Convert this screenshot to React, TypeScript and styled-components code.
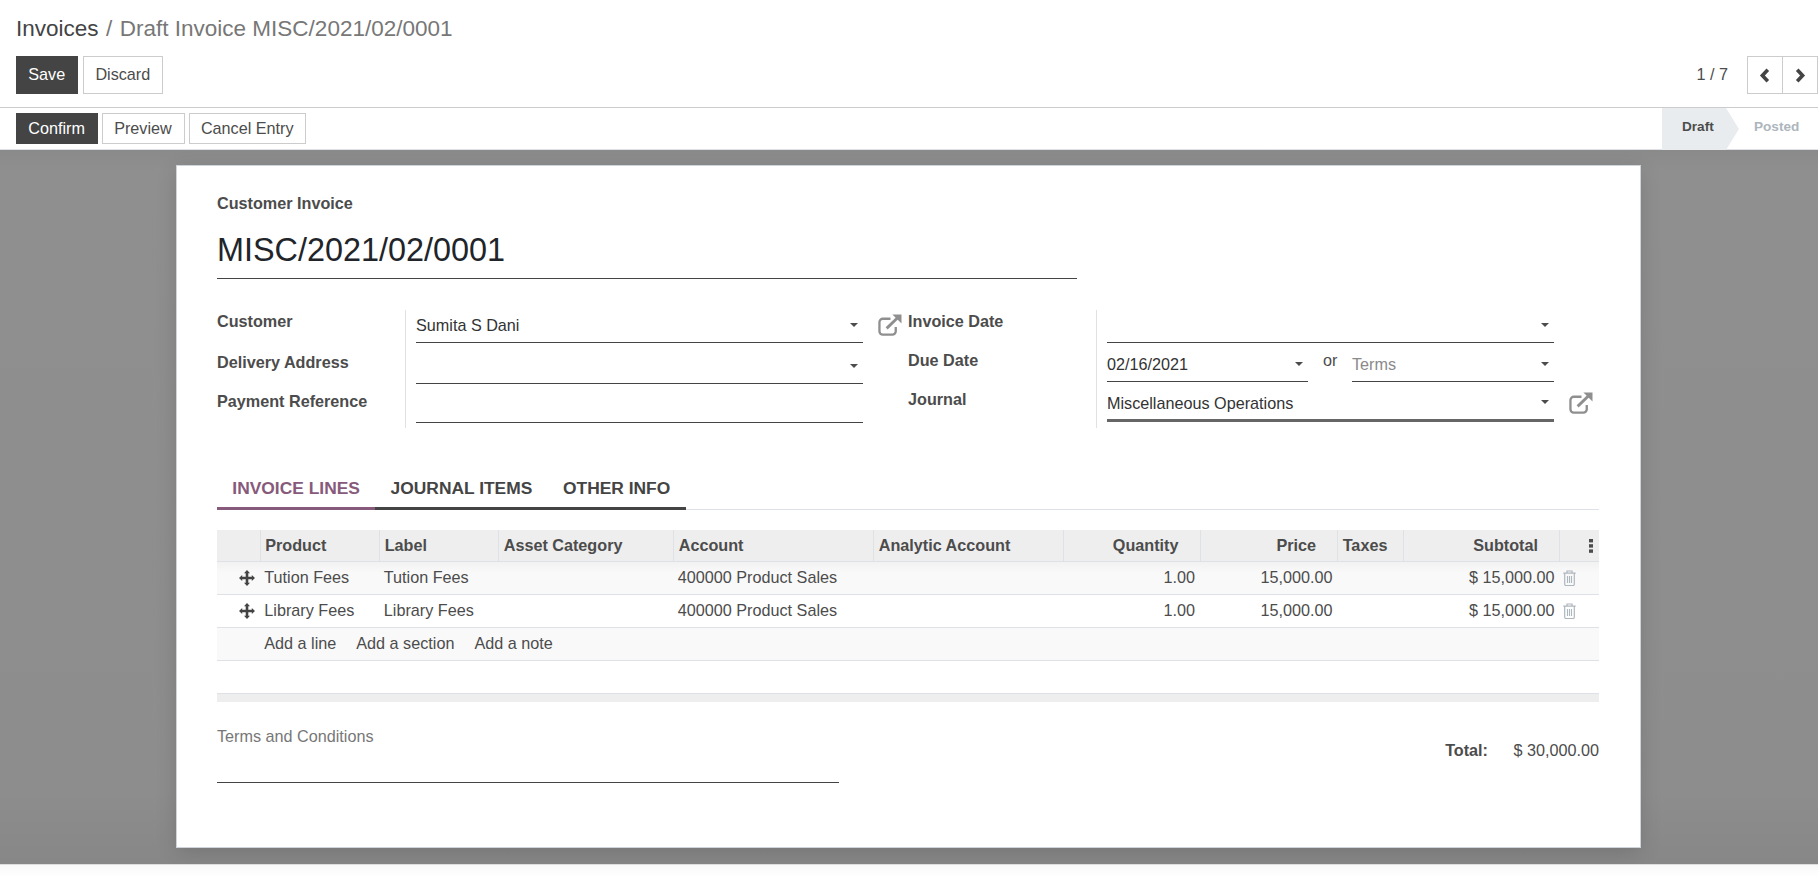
import React from "react";
import styled, { createGlobalStyle } from "styled-components";

const Global = createGlobalStyle`
  html, body { margin: 0; padding: 0; height: 100%; overflow: hidden; background: #fff; }
  body { font-family: "Liberation Sans", Arial, sans-serif; font-size: 16.2px; line-height: 18px; color: #4c4c4c; }
  * { box-sizing: border-box; }
`;

const Page = styled.div`display: flex; flex-direction: column; height: 877px; width: 1818px;`;
const TopPanel = styled.header`height: 108px; padding-left: 16px; border-bottom: 1px solid #ccc; flex: none;`;
const Breadcrumb = styled.div`height: 56px; display: flex; align-items: center; font-size: 22.5px; line-height: 26px; padding-top: 1px;`;
const Crumb = styled.span`color: #444;`;
const CrumbActive = styled.span`color: #777; margin-left: 7.5px;`;
const Sep = styled.span`color: #777; margin-left: 7.5px;`;
const ActionRow = styled.div`display: flex; align-items: stretch; height: 38px;`;
const Btn = styled.button<{ $primary?: boolean; $h?: number }>`
  font: inherit; height: ${p => p.$h ?? 38}px; padding: 0 11.9px ${p => (p.$h ? 2 : 3)}px 11.3px; border-radius: 0; cursor: pointer;
  border: 1px solid ${p => (p.$primary ? "#444" : "#ccc")};
  background: ${p => (p.$primary ? "#444" : "#fff")};
  color: ${p => (p.$primary ? "#fff" : "#4c4c4c")};
`;
const Gap = styled.div<{ $gap: number }>`display: flex; gap: ${p => p.$gap}px;`;
const Pager = styled.div`margin-left: auto; display: flex; align-items: center;`;
const PagerText = styled.span`margin-right: 19px; padding-bottom: 3px;`;
const PagerBtn = styled.button`
  width: 36px; height: 38px; background: #fff; border: 1px solid #ccc; padding: 0; display: flex; align-items: center; justify-content: center; color: #444;
  & + & { margin-left: -1px; }
`;
const StatusRow = styled.div`flex: none; height: 42px; display: flex; align-items: center; padding-left: 16px; border-bottom: 1px solid #dee2e6;`;
const Statusbar = styled.div`margin-left: auto; align-self: stretch; display: flex; margin-bottom: -1px;`;
const StepActive = styled.div`
  width: 77px; display: flex; align-items: center; justify-content: flex-start; background: #e9ecef; font-size: 13.6px; font-weight: 700;
  clip-path: polygon(0 0, 64px 0, 77px 50%, 64px 100%, 0 100%); padding: 0 0 4px 20px;
`;
const Step = styled.div`width: 79px; display: flex; align-items: center; padding: 0 0 4px 15px; font-size: 13.6px; font-weight: 700; color: #adb5bd;`;
const Content = styled.main`flex: none; height: 714px; background: #8d8d8d; padding: 15px 1px 0 0; display: flex; justify-content: center; background-image: linear-gradient(#8a8a8a, #8f8f8f 3%, #8d8d8d 90%, #878787);`;
const Sheet = styled.section`width: 1465px; height: 683px; background: #fff; border: 1px solid #ced4da; padding: 0 41px 0 40px; box-shadow: 0 5px 20px -1px rgba(0, 0, 0, 0.15);`;
const Caption = styled.div`font-weight: 700; padding-top: 28px; height: 46px;`;
const Title = styled.div`width: 860px; height: 67px; border-bottom: 1px solid #444; color: #212529; font-size: 32.4px; line-height: 38px; padding-top: 19px;`;
const FormRow = styled.div`display: flex; margin-top: 31px;`;
const Group = styled.div<{ $rows: string; $w: number }>`display: grid; width: ${p => p.$w}px; grid-template-columns: 188px 1fr; grid-template-rows: ${p => p.$rows};`;
const FieldLabel = styled.label<{ $top: number }>`font-weight: 700; padding-top: ${p => p.$top}px;`;
const Value = styled.div`border-left: 1px solid #dee2e6; padding-left: 10px; display: flex; align-items: flex-start; gap: 15px; position: relative;`;
const Input = styled.div<{ $w?: number; $h: number; $thick?: boolean; $muted?: boolean; $ml?: number }>`
  position: relative; width: ${p => p.$w ?? 447}px; height: ${p => p.$h}px; flex: none; display: flex; align-items: flex-end; padding-bottom: ${p => (p.$thick ? 7 : 8)}px;
  margin-left: ${p => p.$ml ?? 0}px;
  border-bottom: ${p => (p.$thick ? "3px solid #666" : "1px solid #444")}; color: ${p => (p.$muted ? "#8a8a8a" : "#333")};
`;
const Caret = styled.i`position: absolute; right: 5.5px; bottom: 15px; width: 0; height: 0; border-left: 4.5px solid transparent; border-right: 4.5px solid transparent; border-top: 4.5px solid #4c4c4c;`;
const Or = styled.span`position: absolute; left: 226px; top: 8px;`;
const ExtWrap = styled.span<{ $top: number }>`margin-top: ${p => p.$top}px; color: #8f8f8f; display: flex;`;
const Tabs = styled.nav`display: flex; margin-top: 27px; height: 55px; border-bottom: 1px solid #dee2e6;`;
const Tab = styled.a<{ $active?: boolean }>`
  padding: 22px 15.35px 0; height: 55px; font-size: 17.4px; font-weight: 700; line-height: 22px; border-bottom: 3px solid ${p => (p.$active ? "#875a7b" : "#444")}; color: ${p => (p.$active ? "#875a7b" : "#444")}; margin-bottom: -1px;
`;
const TableWrap = styled.div`margin-top: 20px;`;
const Table = styled.table`width: 1382px; table-layout: fixed; border-collapse: collapse;`;
const Th = styled.th<{ $right?: boolean }>`
  height: 31px; background: #eee; font-weight: 700; padding: 0 ${p => (p.$right ? 21 : 5)}px 1px 4.7px; text-align: ${p => (p.$right ? "right" : "left")}; border-left: 1px solid #dee2e6; border-bottom: 1px solid #dee2e6;
  &:first-child { border-left: 0; }
`;
const Tr = styled.tr<{ $shade?: boolean }>`
  background: ${p => (p.$shade ? "linear-gradient(#f1f1f1, #f9f9f9 35%)" : "#fff")};
`;
const Td = styled.td<{ $right?: boolean }>`
  height: 33px; padding: 0 5px 1px 4.3px; text-align: ${p => (p.$right ? "right" : "left")}; border-bottom: 1px solid #dee2e6; overflow: hidden; white-space: nowrap;
`;
const IconCell = styled(Td)`padding: 1px 0 0 22px; color: #444;`;
const TrashCell = styled(Td)`padding: 1px 0 0 3px; color: #aeb6be;`;
const AddRow = styled.tr`background: #f9f9f9;`;
const AddLinks = styled.div`display: flex; gap: 20px;`;
const BlankRow = styled.div`height: 33px; border-bottom: 1px solid #dee2e6;`;
const FootBar = styled.div`height: 8px; background: #eee;`;
const Bottom = styled.div`display: flex; justify-content: space-between;`;
const Notes = styled.div`width: 622px; height: 81px; padding-top: 25px; border-bottom: 1px solid #444; color: #777;`;
const Totals = styled.div`padding-top: 39px; display: flex; gap: 25.5px;`;
const TotalLabel = styled.b`font-weight: 700;`;
const Foot = styled.div`flex: 1; border-top: 1px solid #ddd; background: linear-gradient(#f8f8f8, #fff);`;

const Ext = () => (
  <svg width="24" height="22" viewBox="0 0 25 22" fill="none">
    <path d="M13 4.5H5A3.5 3.5 0 0 0 1.5 8v9.5A3.5 3.5 0 0 0 5 21h10a3.5 3.5 0 0 0 3.5-3.5V13" stroke="currentColor" strokeWidth="2.4" />
    <path d="M9 14.5 21 3" stroke="currentColor" strokeWidth="3" />
    <path d="M15 0h9.5v9.5z" fill="currentColor" />
  </svg>
);
const Move = () => (
  <svg width="16" height="16" viewBox="0 0 16 16" fill="currentColor" style={{ display: "block" }}>
    <path d="M8 0 11 3.2H9.3V6.7H12.8V5L16 8l-3.2 3V9.3H9.3V12.8H11L8 16l-3-3.2H6.7V9.3H3.2V11L0 8l3.2-3V6.7H6.7V3.2H5Z" />
  </svg>
);
const Trash = () => (
  <svg width="13" height="16" viewBox="0 0 13 16" fill="none" stroke="currentColor" style={{ display: "block" }}>
    <path d="M.3 3.2h12.4M4 3V1h5v2M1.7 3v11.3a1.2 1.2 0 0 0 1.2 1.2h7.2a1.2 1.2 0 0 0 1.2-1.2V3" strokeWidth="1.2" />
    <path d="M4.5 6v7M6.5 6v7M8.5 6v7" strokeWidth="1.1" />
  </svg>
);
const Dots = () => (
  <svg width="4" height="14" viewBox="0 0 4 14" fill="#4c4c4c" style={{ display: "block", margin: "2px 0 0 24px" }}>
    <rect width="4" height="3.4" /><rect y="5.2" width="4" height="3.4" /><rect y="10.4" width="4" height="3.4" />
  </svg>
);
const Chevron = ({ d }: { d: string }) => (
  <svg width="12" height="15" viewBox="0 0 12 15" fill="none" stroke="currentColor" strokeWidth="3.6"><path d={d} /></svg>
);

const cols = [43, 119.5, 119, 175, 200, 189.5, 137, 137.5, 66, 156, 39.5];
const headers: [string, boolean][] = [["", false], ["Product", false], ["Label", false], ["Asset Category", false], ["Account", false], ["Analytic Account", false], ["Quantity", true], ["Price", true], ["Taxes", false], ["Subtotal", true]];
const lines = ["Tution Fees", "Library Fees"];

export default function App() {
  return (
    <Page>
      <Global />
      <TopPanel>
        <Breadcrumb>
          <Crumb>Invoices</Crumb><Sep>/</Sep><CrumbActive>Draft Invoice MISC/2021/02/0001</CrumbActive>
        </Breadcrumb>
        <ActionRow>
          <Gap $gap={5}><Btn $primary>Save</Btn><Btn>Discard</Btn></Gap>
          <Pager>
            <PagerText>1 / 7</PagerText>
            <PagerBtn><Chevron d="M8.8 1.8 3.4 7.5l5.4 5.7" /></PagerBtn>
            <PagerBtn><Chevron d="M3.2 1.8 8.6 7.5l-5.4 5.7" /></PagerBtn>
          </Pager>
        </ActionRow>
      </TopPanel>
      <StatusRow>
        <Gap $gap={4}><Btn $primary $h={31}>Confirm</Btn><Btn $h={31}>Preview</Btn><Btn $h={31}>Cancel Entry</Btn></Gap>
        <Statusbar><StepActive>Draft</StepActive><Step>Posted</Step></Statusbar>
      </StatusRow>
      <Content>
        <Sheet>
          <Caption>Customer Invoice</Caption>
          <Title>MISC/2021/02/0001</Title>
          <FormRow>
            <Group $w={691} $rows="33px 41px 44px">
              <FieldLabel $top={2}>Customer</FieldLabel>
              <Value>
                <Input $h={33}>Sumita S Dani<Caret /></Input>
                <ExtWrap $top={4}><Ext /></ExtWrap>
              </Value>
              <FieldLabel $top={10}>Delivery Address</FieldLabel>
              <Value><Input $h={41}><Caret /></Input></Value>
              <FieldLabel $top={8}>Payment Reference</FieldLabel>
              <Value><Input $h={39} /></Value>
            </Group>
            <Group $w={691} $rows="33px 39px 46px">
              <FieldLabel $top={2}>Invoice Date</FieldLabel>
              <Value><Input $h={33}><Caret /></Input></Value>
              <FieldLabel $top={8}>Due Date</FieldLabel>
              <Value>
                <Input $w={201} $h={39}>02/16/2021<Caret /></Input>
                <Or>or</Or>
                <Input $w={202} $h={39} $muted $ml={29}>Terms<Caret /></Input>
              </Value>
              <FieldLabel $top={8}>Journal</FieldLabel>
              <Value>
                <Input $h={40} $thick>Miscellaneous Operations<Caret /></Input>
                <ExtWrap $top={10}><Ext /></ExtWrap>
              </Value>
            </Group>
          </FormRow>
          <Tabs>
            <Tab $active>INVOICE LINES</Tab>
            <Tab>JOURNAL ITEMS</Tab>
            <Tab>OTHER INFO</Tab>
          </Tabs>
          <TableWrap>
            <Table>
              <colgroup>{cols.map((w, i) => <col key={i} style={{ width: w }} />)}</colgroup>
              <thead>
                <tr>
                  {headers.map(([h, r], i) => <Th key={i} $right={r}>{h}</Th>)}
                  <Th><Dots /></Th>
                </tr>
              </thead>
              <tbody>
                {lines.map((l, i) => (
                  <Tr key={l} $shade={i === 0}>
                    <IconCell><Move /></IconCell>
                    <Td>{l}</Td><Td>{l}</Td><Td />
                    <Td>400000 Product Sales</Td><Td />
                    <Td $right>1.00</Td><Td $right>15,000.00</Td><Td />
                    <Td $right>$ 15,000.00</Td>
                    <TrashCell><Trash /></TrashCell>
                  </Tr>
                ))}
                <AddRow>
                  <Td />
                  <Td colSpan={10}>
                    <AddLinks><span>Add a line</span><span>Add a section</span><span>Add a note</span></AddLinks>
                  </Td>
                </AddRow>
              </tbody>
            </Table>
            <BlankRow />
            <FootBar />
          </TableWrap>
          <Bottom>
            <Notes>Terms and Conditions</Notes>
            <Totals><TotalLabel>Total:</TotalLabel><span>$ 30,000.00</span></Totals>
          </Bottom>
        </Sheet>
      </Content>
      <Foot />
    </Page>
  );
}
